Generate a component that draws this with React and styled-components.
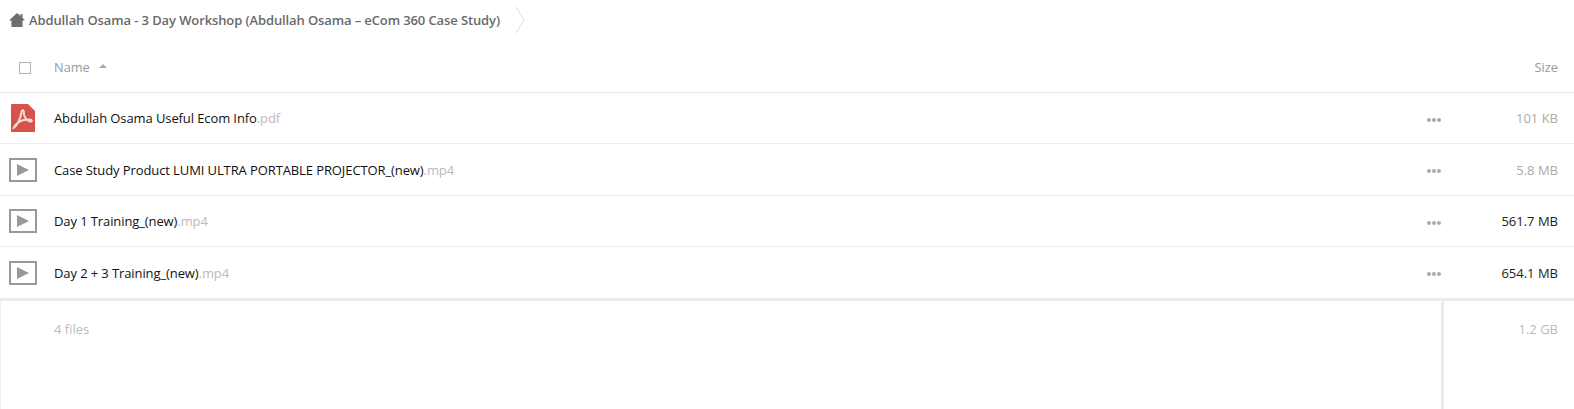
import React from 'react'
import styled, { createGlobalStyle } from 'styled-components'

const Global = createGlobalStyle`
  html, body {
    margin: 0;
    padding: 0;
    background: #fff;
    font-family: "Open Sans", "Liberation Sans", sans-serif;
    overflow: hidden;
  }
`

const Page = styled.div`
  width: 1574px;
  height: 409px;
  display: flex;
  flex-direction: column;
`

const Breadcrumb = styled.div`
  height: 40px;
  display: flex;
  align-items: center;
  padding-left: 9px;
  color: #6a6a6a;
  font-size: 13px;
  font-weight: 600;
`

const Crumb = styled.span`
  margin-left: 4px;
  letter-spacing: -0.11px;
`

const Chevron = styled.svg`
  margin-left: 15px;
  width: 10px;
  height: 26px;
`

const HeadRow = styled.div`
  height: 53px;
  padding-top: 2px;
  box-sizing: border-box;
  display: flex;
  align-items: center;
  border-bottom: 1px solid #e8e8e8;
  color: #999;
  font-size: 12.8px;
`

const CheckCell = styled.div`
  width: 54px;
  display: flex;
  padding-left: 19px;
  box-sizing: border-box;
`

const Check = styled.div`
  width: 10px;
  height: 10px;
  margin-top: 1px;
  border: 1px solid #b4b4b4;
`

const SortArrow = styled.span`
  display: inline-block;
  margin-left: 9px;
  margin-bottom: 2px;
  border-left: 4px solid transparent;
  border-right: 4px solid transparent;
  border-bottom: 4px solid #aaa;
`

const NameHead = styled.div`
  flex: 1;
  display: flex;
  align-items: center;
`

const SizeHead = styled.div`
  padding-right: 16px;
`

const Row = styled.div`
  height: ${(p) => p.$h}px;
  box-sizing: border-box;
  display: flex;
  align-items: center;
  border-bottom: 1px solid #ececec;
  font-size: 13px;
`

const IconCell = styled.div`
  width: 54px;
  padding-left: ${(p) => p.$pad}px;
  box-sizing: border-box;
  display: flex;
`

const FileName = styled.div`
  flex: 1;
  color: #111;
  white-space: nowrap;
  letter-spacing: -0.1px;
`

const Ext = styled.span`
  color: #bbb;
`

const Dots = styled.div`
  display: flex;
  gap: 1px;
  margin-top: 3px;
`

const Dot = styled.i`
  width: 4px;
  height: 4px;
  border-radius: 50%;
  background: #aaa;
`

const Size = styled.div`
  width: 133px;
  padding-right: 16px;
  box-sizing: border-box;
  text-align: right;
  color: ${(p) => (p.$dark ? '#222' : '#aaa')};
`

const Footer = styled.div`
  flex: 1;
  display: flex;
  border-top: 2px solid #ececec;
  font-size: 13px;
  color: #bbb;
`

const FooterMain = styled.div`
  flex: 1;
  border-left: 1px solid #f0f0f0;
  border-right: 3px solid #ececec;
  padding: 19px 0 0 53px;
`

const FooterSize = styled.div`
  width: 130px;
  padding: 19px 16px 0 0;
  box-sizing: border-box;
  text-align: right;
`

const HomeIcon = () => (
  <svg width="16" height="14" viewBox="0 0 16 14">
    <path d="M8 0 L11.5 3 V1 H13.5 V4.8 L16 7.4 H13.6 V14 H2.4 V7.4 H0 Z" fill="#6e6e6e" />
  </svg>
)

const PdfIcon = () => (
  <svg width="24" height="28" viewBox="0 0 24 28">
    <path d="M1 0 H17 L24 7 V27 a1 1 0 0 1 -1 1 H1 a1 1 0 0 1 -1 -1 V1 a1 1 0 0 1 1 -1 Z" fill="#d6524a" />
    <path
      d="M3 23.5 C6 22 9.5 15 10.5 8 C10.8 5.5 13 5.5 12.8 8.5 C12.6 12 15 16 19 17.5 C21.5 18.2 21.5 15.5 18.5 15.5 C13 15.5 8 17 5 20.5 C3.5 22.3 3 23.5 3 23.5 Z"
      fill="none"
      stroke="#f6dcd9"
      strokeWidth="2"
    />
  </svg>
)

const VideoIcon = () => (
  <svg width="28" height="24" viewBox="0 0 28 24">
    <rect x="1" y="1" width="26" height="22" fill="#fff" stroke="#999" strokeWidth="2" />
    <path d="M8 6 L20 12 L8 18 Z" fill="#999" />
  </svg>
)

const files = [
  { name: 'Abdullah Osama Useful Ecom Info', ext: '.pdf', size: '101 KB', pdf: true, h: 51 },
  { name: 'Case Study Product LUMI ULTRA PORTABLE PROJECTOR_(new)', ext: '.mp4', size: '5.8 MB', h: 52 },
  { name: 'Day 1 Training_(new)', ext: '.mp4', size: '561.7 MB', dark: true, h: 51 },
  { name: 'Day 2 + 3 Training_(new)', ext: '.mp4', size: '654.1 MB', dark: true, h: 52 },
]

export default function App() {
  return (
    <Page>
      <Global />
      <Breadcrumb>
        <HomeIcon />
        <Crumb>Abdullah Osama - 3 Day Workshop (Abdullah Osama – eCom 360 Case Study)</Crumb>
        <Chevron viewBox="0 0 10 26">
          <path d="M1 0 L9 13 L1 26" fill="none" stroke="#ddd" />
        </Chevron>
      </Breadcrumb>
      <HeadRow>
        <CheckCell>
          <Check />
        </CheckCell>
        <NameHead>
          Name
          <SortArrow />
        </NameHead>
        <SizeHead>Size</SizeHead>
      </HeadRow>
      {files.map((f) => (
        <Row key={f.name} $h={f.h}>
          <IconCell $pad={f.pdf ? 11 : 9}>{f.pdf ? <PdfIcon /> : <VideoIcon />}</IconCell>
          <FileName>
            {f.name}
            <Ext>{f.ext}</Ext>
          </FileName>
          <Dots>
            <Dot />
            <Dot />
            <Dot />
          </Dots>
          <Size $dark={f.dark}>{f.size}</Size>
        </Row>
      ))}
      <Footer>
        <FooterMain>4 files</FooterMain>
        <FooterSize>1.2 GB</FooterSize>
      </Footer>
    </Page>
  )
}
